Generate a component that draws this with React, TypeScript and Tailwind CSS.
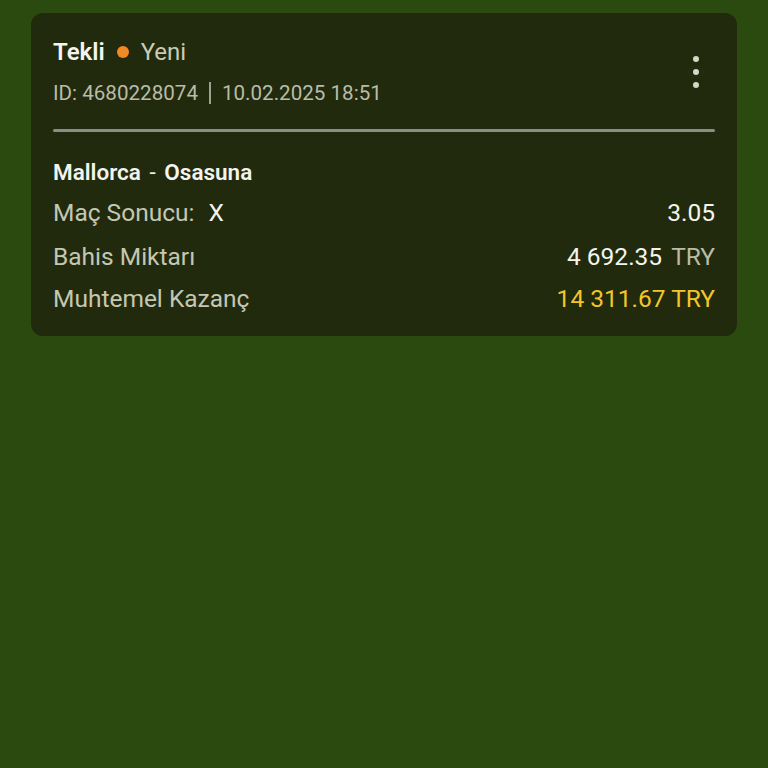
import React from "react";

export default function App() {
  return (
    <div
      className="w-[768px] h-[768px] bg-[#2a4a0f] pt-[13px] px-[31px]"
      style={{ fontFamily: "Roboto, 'Liberation Sans', sans-serif" }}
    >
      <div className="bg-[#222a0d] rounded-[12px] pt-[23px] pb-[21px] px-[22px]">
        <div className="flex justify-between">
          <div>
            <div className="flex items-center h-[32px] text-[24px] leading-[32px]">
              <span className="font-semibold text-[#f3f4ee]">Tekli</span>
              <span className="w-[12px] h-[12px] rounded-full bg-[#f08a24] ml-[12px] mr-[12px]" />
              <span className="text-[#c9ccb8]">Yeni</span>
            </div>
            <div className="mt-[11px] flex items-center text-[20.6px] leading-[28px] text-[#b9bca8]">
              <span>ID: 4680228074</span>
              <span className="mx-[11px] w-[2px] h-[22px] bg-[#9fa290]" />
              <span>10.02.2025 18:51</span>
            </div>
          </div>
          <div className="flex flex-col gap-[7px] pt-[20px] pr-[16px]">
            <span className="w-[6px] h-[6px] rounded-full bg-[#d4d8c6]" />
            <span className="w-[6px] h-[6px] rounded-full bg-[#d4d8c6]" />
            <span className="w-[6px] h-[6px] rounded-full bg-[#d4d8c6]" />
          </div>
        </div>
        <div className="mt-[22px] h-[3px] rounded-full bg-[#8b8d86]" />
        <div className="mt-[26px] text-[22.5px] leading-[28px] font-semibold text-[#f3f4ee]">
          Mallorca <span className="mx-[3px] font-normal">-</span> Osasuna
        </div>
        <div className="mt-[11px] flex justify-between text-[24.5px] leading-[32px]">
          <div>
            <span className="text-[#c4c7b3]">Maç Sonucu:</span>
            <span className="ml-[14px] text-[#f3f4ee]">X</span>
          </div>
          <span className="text-[#f3f4ee]">3.05</span>
        </div>
        <div className="mt-[12px] flex justify-between text-[24.5px] leading-[32px]">
          <span className="text-[#c4c7b3]">Bahis Miktarı</span>
          <span>
            <span className="text-[#f3f4ee]">4 692.35</span>
            <span className="ml-[9px] text-[#b9bca8]">TRY</span>
          </span>
        </div>
        <div className="mt-[10px] flex justify-between text-[24.5px] leading-[32px]">
          <span className="text-[#c4c7b3]">Muhtemel Kazanç</span>
          <span className="text-[#f2c62a]">14 311.67 TRY</span>
        </div>
      </div>
    </div>
  );
}
